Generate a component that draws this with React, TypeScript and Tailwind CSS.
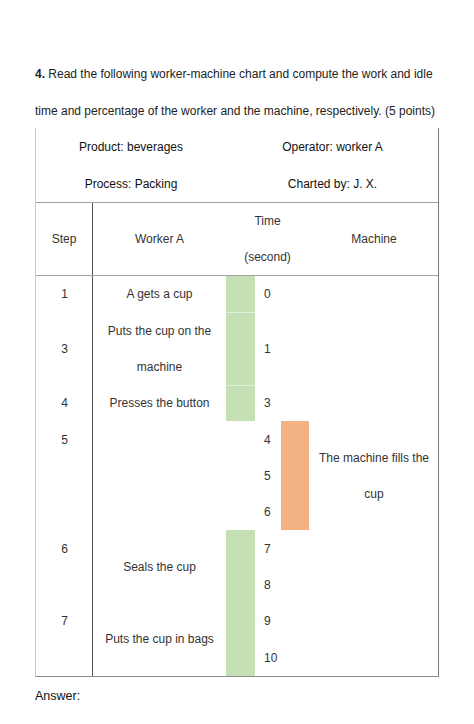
const font = { fontFamily: '"Liberation Sans", Arial, sans-serif' };

function Cell({ className = "", children }: { className?: string; children?: React.ReactNode }) {
  return <div className={`flex items-center ${className}`}>{children}</div>;
}

export default function App() {
  return (
    <div className="min-h-screen w-[474px] bg-white text-[12px] text-[#222]" style={font}>
      <div className="pl-[35px] pr-[30px] pt-[56px]">
        {/* Question */}
        <p className="whitespace-nowrap text-[12px] leading-[37px] text-[#222]">
          <span className="font-bold">4.</span> Read the following worker-machine chart and compute the work and idle
          <br />
          time and percentage of the worker and the machine, respectively. (5 points)
        </p>

        {/* Chart */}
        <div className="mt-[-2px] w-[404px] border-l border-l-[#c9c9c9] border-r border-r-[#7a7a7a] border-b border-b-[#8a8a8a]">
          <div className="grid grid-cols-[190px_213px] grid-rows-[37px_37px] border-b border-b-[#a0a0a0] text-[#111]">
            <Cell className="justify-center">Product: beverages</Cell>
            <Cell className="justify-center">Operator: worker A</Cell>
            <Cell className="justify-center">Process: Packing</Cell>
            <Cell className="justify-center">Charted by: J. X.</Cell>
          </div>

          <div className="grid grid-cols-[57px_133px_29px_26px_28px_130px] grid-rows-[36px_36px] border-b border-b-[#a0a0a0] text-[#333]">
            <Cell className="row-span-2 justify-center border-r border-r-[#555]">Step</Cell>
            <Cell className="row-span-2 justify-center">Worker A</Cell>
            <Cell className="col-span-3 justify-center">Time</Cell>
            <Cell className="row-span-2 justify-center">Machine</Cell>
            <Cell className="col-span-3 justify-center">(second)</Cell>
          </div>

          <div className="grid grid-cols-[57px_133px_29px_26px_28px_130px] grid-rows-[repeat(22,18.18px)] text-[#333]">
            {/* step column */}
            <div className="col-start-1 row-start-1 row-end-23 border-r border-r-[#555]" />
            <Cell className="col-start-1 row-start-1 row-span-2 justify-center">1</Cell>
            <Cell className="col-start-1 row-start-4 row-span-2 justify-center">3</Cell>
            <Cell className="col-start-1 row-start-7 row-span-2 justify-center">4</Cell>
            <Cell className="col-start-1 row-start-9 row-span-2 justify-center">5</Cell>
            <Cell className="col-start-1 row-start-15 row-span-2 justify-center">6</Cell>
            <Cell className="col-start-1 row-start-19 row-span-2 justify-center">7</Cell>

            {/* worker column */}
            <Cell className="col-start-2 row-start-1 row-span-2 justify-center">A gets a cup</Cell>
            <Cell className="col-start-2 row-start-3 row-span-2 justify-center">Puts the cup on the</Cell>
            <Cell className="col-start-2 row-start-5 row-span-2 justify-center">machine</Cell>
            <Cell className="col-start-2 row-start-7 row-span-2 justify-center">Presses the button</Cell>
            <Cell className="col-start-2 row-start-16 row-span-2 justify-center">Seals the cup</Cell>
            <Cell className="col-start-2 row-start-20 row-span-2 justify-center">Puts the cup in bags</Cell>

            {/* worker bars */}
            <div className="col-start-3 row-start-1 row-span-2 bg-[#c5e0b4]" />
            <div className="col-start-3 row-start-3 row-span-4 border-t border-t-[#e2f0d9] bg-[#c5e0b4]" />
            <div className="col-start-3 row-start-7 row-span-2 border-t border-t-[#e2f0d9] bg-[#c5e0b4]" />
            <div className="col-start-3 row-start-15 row-span-8 bg-[#c5e0b4]" />

            {/* time */}
            <Cell className="col-start-4 row-start-1 row-span-2 pl-[9px]">0</Cell>
            <Cell className="col-start-4 row-start-4 row-span-2 pl-[9px]">1</Cell>
            <Cell className="col-start-4 row-start-7 row-span-2 pl-[9px]">3</Cell>
            <Cell className="col-start-4 row-start-9 row-span-2 pl-[9px]">4</Cell>
            <Cell className="col-start-4 row-start-11 row-span-2 pl-[9px]">5</Cell>
            <Cell className="col-start-4 row-start-13 row-span-2 pl-[9px]">6</Cell>
            <Cell className="col-start-4 row-start-15 row-span-2 pl-[9px]">7</Cell>
            <Cell className="col-start-4 row-start-17 row-span-2 pl-[9px]">8</Cell>
            <Cell className="col-start-4 row-start-19 row-span-2 pl-[9px]">9</Cell>
            <Cell className="col-start-4 row-start-21 row-span-2 pl-[9px]">10</Cell>

            {/* machine bar */}
            <div className="col-start-5 row-start-9 row-span-6 bg-[#f4b183]" />

            {/* machine column */}
            <Cell className="col-start-6 row-start-10 row-span-2 justify-center">The machine fills the</Cell>
            <Cell className="col-start-6 row-start-12 row-span-2 justify-center">cup</Cell>
          </div>
        </div>

        <p className="mt-[10px] text-[12.5px] text-[#111]">Answer:</p>
      </div>
    </div>
  );
}
